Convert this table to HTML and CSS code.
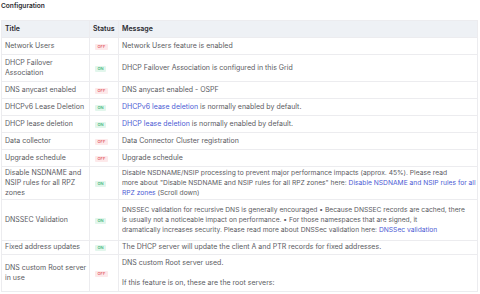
FILE: index.html
```html
<!DOCTYPE html>
<html lang="en">
<head>
<meta charset="utf-8">
<title>Configuration</title>
<link rel="stylesheet" href="styles.css">
</head>
<body>
<section class="config">
  <h2 class="config-title">Configuration</h2>
  <table class="config-table">
    <colgroup>
      <col class="col-title">
      <col class="col-status">
      <col class="col-message">
    </colgroup>
    <thead>
      <tr><th>Title</th><th>Status</th><th>Message</th></tr>
    </thead>
    <tbody>
      <tr><td>Network Users</td><td><span class="badge off">OFF</span></td><td>Network Users feature is enabled</td></tr>
      <tr><td>DHCP Failover<br>Association</td><td><span class="badge on">ON</span></td><td>DHCP Failover Association is configured in this Grid</td></tr>
      <tr><td>DNS anycast enabled</td><td><span class="badge off">OFF</span></td><td>DNS anycast enabled - OSPF</td></tr>
      <tr><td>DHCPv6 Lease Deletion</td><td><span class="badge on">ON</span></td><td><a href="#">DHCPv6 lease deletion</a> is normally enabled by default.</td></tr>
      <tr><td>DHCP lease deletion</td><td><span class="badge on">ON</span></td><td><a href="#">DHCP lease deletion</a> is normally enabled by default.</td></tr>
      <tr><td>Data collector</td><td><span class="badge off">OFF</span></td><td>Data Connector Cluster registration</td></tr>
      <tr><td>Upgrade schedule</td><td><span class="badge off">OFF</span></td><td>Upgrade schedule</td></tr>
      <tr class="row-tight"><td>Disable NSDNAME and<br>NSIP rules for all RPZ<br>zones</td><td><span class="badge on">ON</span></td><td class="long">Disable NSDNAME/NSIP processing to prevent major performance impacts (approx. 45%). Please read<br>more about "Disable NSDNAME and NSIP rules for all RPZ zones" here: <a href="#">Disable NSDNAME and NSIP rules for all<br>RPZ zones</a> (Scroll down)</td></tr>
      <tr class="row-loose"><td>DNSSEC Validation</td><td><span class="badge on">ON</span></td><td class="long">DNSSEC validation for recursive DNS is generally encouraged • Because DNSSEC records are cached, there<br>is usually not a noticeable impact on performance. • For those namespaces that are signed, it<br>dramatically increases security. Please read more about DNSSec validation here: <a href="#">DNSSec validation</a></td></tr>
      <tr class="row-short"><td>Fixed address updates</td><td><span class="badge on">ON</span></td><td>The DHCP server will update the client A and PTR records for fixed addresses.</td></tr>
      <tr><td>DNS custom Root server<br>in use</td><td><span class="badge off">OFF</span></td><td>DNS custom Root server used.<br><br>If this feature is on, these are the root servers:</td></tr>
    </tbody>
  </table>
</section>
</body>
</html>
```
FILE: styles.css
```css
html, body {
  margin: 0;
  padding: 0;
  background: #ffffff;
}
body {
  font-family: Inter, "Open Sans", "Liberation Sans", sans-serif;
  color: #5b5b62;
  font-size: 7px;
  line-height: 10px;
}
.config {
  padding: 1px 2px 0 1px;
}
.config-title {
  margin: 0;
  font-size: 6.6px;
  line-height: 10px;
  font-weight: 600;
  color: #2b2b30;
  height: 19px;
}
.config-table {
  width: 100%;
  border-collapse: collapse;
  table-layout: fixed;
  border: 1px solid #ececef;
}
.col-title { width: 88px; }
.col-status { width: 29px; }
.config-table th,
.config-table td {
  border: 1px solid #ececef;
  padding: 3px 3px;
  text-align: left;
  vertical-align: middle;
  white-space: nowrap;
  overflow: hidden;
}
.config-table th {
  background: #eef1f5;
  color: #2a2a30;
  font-weight: 600;
}
.config-table td.long {
  font-size: 6.7px;
}
.row-tight td {
  padding-top: 1px;
  padding-bottom: 1px;
}
.row-loose td {
  padding-top: 5px;
  padding-bottom: 5px;
}
.row-short td {
  padding-top: 1px;
  padding-bottom: 2px;
}
.config-table a {
  color: #4c5bd4;
  text-decoration: none;
}
.badge {
  display: inline-block;
  font-size: 4px;
  line-height: 6px;
  padding: 0 2.5px;
  border-radius: 1px;
  margin-left: 2px;
  font-weight: 500;
}
.badge.off {
  background: #fde9ea;
  color: #e2555c;
}
.badge.on {
  background: #e2f6ec;
  color: #35b070;
}
```
